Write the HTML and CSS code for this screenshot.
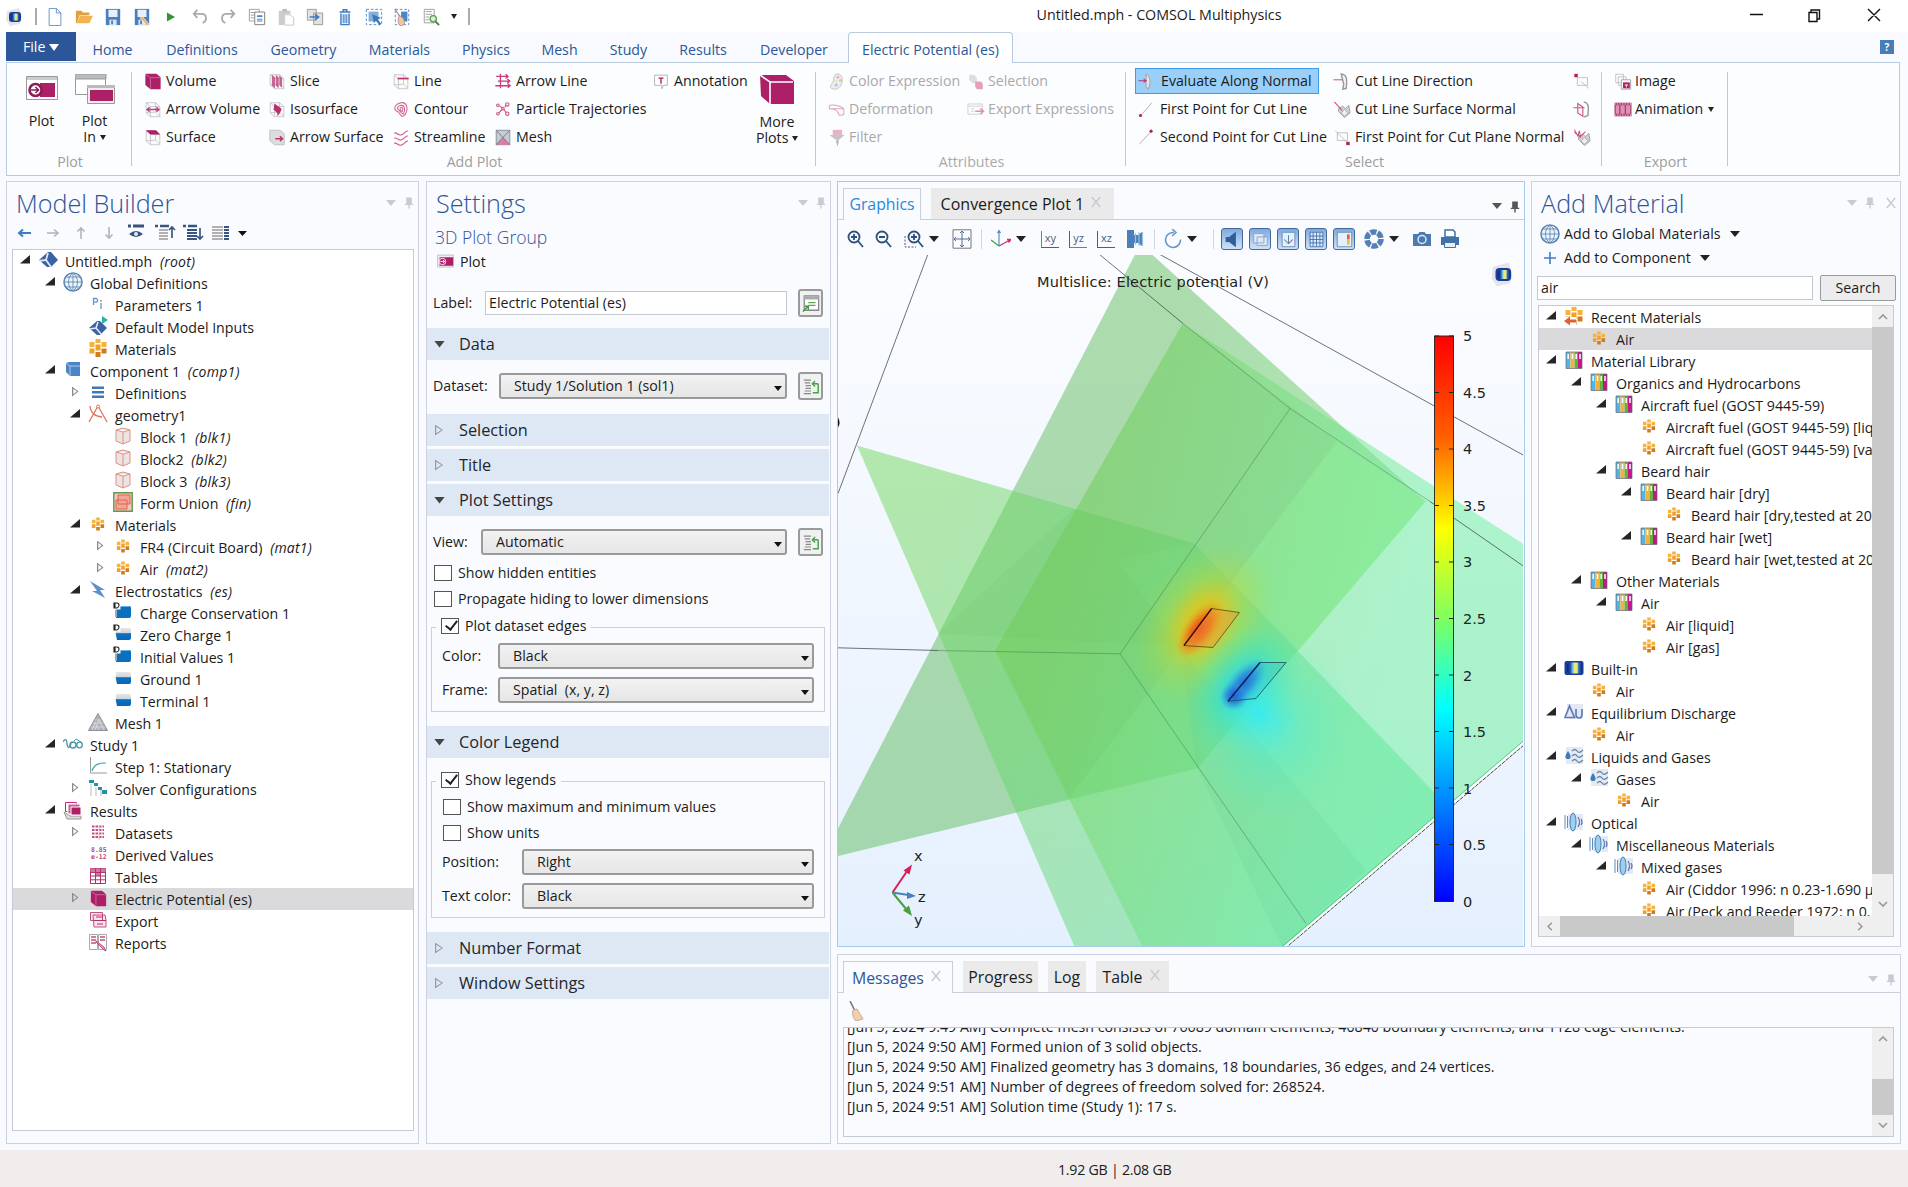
FILE: index.html
```html
<!DOCTYPE html>
<html lang="en">
<head>
<meta charset="utf-8">
<title>Untitled.mph - COMSOL Multiphysics</title>
<link rel="stylesheet" href="styles.css">
</head>
<body>
<svg class="defs" aria-hidden="true">
<defs>
<linearGradient id="gl" x1="0" x2="1"><stop offset="0" stop-color="#14206e"/><stop offset=".22" stop-color="#1f4fb0"/><stop offset=".36" stop-color="#5fb4e0"/><stop offset=".5" stop-color="#f0ec70"/><stop offset=".68" stop-color="#e4e480"/><stop offset=".78" stop-color="#2f6fc8"/><stop offset="1" stop-color="#14256e"/></linearGradient>
<linearGradient id="gcyl" x2="0" y2="1"><stop offset="0" stop-color="#e4e6e8"/><stop offset=".45" stop-color="#cfd3d6"/><stop offset=".46" stop-color="#0a72c2"/><stop offset="1" stop-color="#0a66b4"/></linearGradient>
</defs>
<symbol id="logo" viewBox="0 0 20 20"><path d="M3 4L15 1l3 9-2 7-10 2-4-6z" fill="#e4e4ea"/><rect x="5" y="5" width="12" height="10" rx="3" fill="#1c3c9c"/><rect x="7" y="6.500" width="9" height="7" rx="2" fill="url(#gl)"/></symbol>
<symbol id="new" viewBox="0 0 20 20"><path d="M3.500 .5h8l5 5v14h-13zM11.500 .5v5h5" fill="#fff" stroke="#5b8fc4"/></symbol>
<symbol id="open" viewBox="0 0 20 20"><path d="M1 3h6l2 2h7v3H5l-3 9H1z" fill="#e0a040"/><path d="M5.500 8.500H20L16 17H2z" fill="#f2b452"/></symbol>
<symbol id="save" viewBox="0 0 20 20"><path d="M2 1h16v18H2z" fill="#4a7fc0"/><path d="M5 2h10v8H5z" fill="#e8f1fb"/><path d="M6 13h8v6H6z" fill="#dbe6f2"/><path d="M8 14h2v4H8z" fill="#4a7fc0"/></symbol>
<symbol id="saveas" viewBox="0 0 20 20"><use href="#save"/><path d="M10 9l7 8 1 3-3-1-7-8z" fill="#f0b050" stroke="#fff" stroke-width=".7"/></symbol>
<symbol id="run" viewBox="0 0 20 20"><path d="M5.500 5l9 5-9 5z" fill="#36913a"/></symbol>
<symbol id="undo" viewBox="0 0 20 20"><path d="M7 2L3 6.500 7 11M3.500 6.500H12c6 0 6 8 1 10" fill="none" stroke="#aaa" stroke-width="2"/></symbol>
<symbol id="redo" viewBox="0 0 20 20"><path d="M13 2l4 4.500-4 4.500M16.500 6.500H8c-6 0-6 8-1 10" fill="none" stroke="#aaa" stroke-width="2"/></symbol>
<symbol id="copy" viewBox="0 0 20 20"><path d="M1.500 1.500h11v13h-11zM3 5h6M3 8h4M3 11h4" fill="#fff" stroke="#9a9a9a"/><path d="M7.500 4.500h11v14h-11z" fill="#fff" stroke="#777"/><path d="M10 8h6v2h-6zM10 12h6v1h-6zM10 14h6v1h-6z" fill="#4b86c6"/></symbol>
<symbol id="paste" viewBox="0 0 20 20"><path d="M2 3h13v4H8v12H2z" fill="#ccc"/><path d="M6 1h5v3H6z" fill="#bbb"/><path d="M8.500 7.500h6l4 3v8.500h-10z" fill="#fff" stroke="#c4c4c4"/></symbol>
<symbol id="dup" viewBox="0 0 20 20"><path d="M1.500 1.500h10v12h-10zM8.500 5.500h10v13h-10z" fill="#e2e2e2" stroke="#999"/><path d="M4 10h9M10 7l4 3-4 3" fill="none" stroke="#3a7ac0" stroke-width="1.800"/></symbol>
<symbol id="trash" viewBox="0 0 20 20"><path d="M4 4.500h12M8 4V2h4v2M5.500 6v12.500h9V6" fill="none" stroke="#3d7cc9" stroke-width="1.600"/><path d="M8 7v10M10 7v10M12 7v10" stroke="#3d7cc9" stroke-width="1.200"/></symbol>
<symbol id="sel" viewBox="0 0 20 20"><path d="M1.500 1.500h17v17h-17z" fill="none" stroke="#4a86c8" stroke-dasharray="3 2"/><path d="M4 4h11v11H4z" fill="#7fb0de"/><path d="M8 7l10 4-4 1.500 4 5-2 1.500-4-5-2 3z" fill="#3b78b8"/></symbol>
<symbol id="selc" viewBox="0 0 20 20"><path d="M2.500 1.500h15v17h-15z" fill="none" stroke="#4a86c8" stroke-dasharray="3 2"/><path d="M9 4h7v11h-7z" fill="#4a86c8"/><path d="M2 1l6 9" stroke="#99a" stroke-width="1.500"/><path d="M7 8l5 4 1 6-4 2c-4-2-4-6-2-12z" fill="#eec9a0" stroke="#a78" stroke-width=".8"/></symbol>
<symbol id="find" viewBox="0 0 20 20"><path d="M2.500 1.500h11v15h-11z" fill="#fff" stroke="#999"/><path d="M4 4h7M4 7h7M4 10h4M4 13h4" stroke="#999"/><circle cx="12.500" cy="12" r="3.500" fill="#d8eed6" stroke="#5a9e55" stroke-width="1.500"/><path d="M15 15l4 4" stroke="#4a8e45" stroke-width="2.200"/></symbol>
<symbol id="cube" viewBox="0 0 20 20"><path d="M1 1h13l5 4v14H7l-6-5z" fill="#ad2068"/><path d="M1 1.500l6 4h12M7 6v13" fill="none" stroke="#fff" stroke-width=".8" opacity=".45"/></symbol>
<symbol id="wire" viewBox="0 0 20 20"><path d="M2 2h11l5 4.500v12H7L2 14zM2 2l5 4.500h11M7 6.500v12M13 2v11l5 5M2 14l11-1" fill="#fafafa" fill-opacity=".6" stroke="#c2c2c6" stroke-width="1"/></symbol>
<symbol id="surf" viewBox="0 0 20 20"><use href="#wire"/><path d="M1.500 1.500h12l5 5H7z" fill="#ad2068"/></symbol>
<symbol id="avol" viewBox="0 0 20 20"><use href="#wire"/><path d="M3 10h14M6 7.500L3 10l3 2.500M14 7.500l3 2.500-3 2.500" fill="none" stroke="#c2407c" stroke-width="1.600"/></symbol>
<symbol id="slice" viewBox="0 0 20 20"><use href="#wire"/><path d="M4 2l3.500 3v13L4 15zM8.500 2L12 5v13l-3.500-3zM13 3l3 3v11l-3-2z" fill="#c0487e" fill-opacity=".85"/></symbol>
<symbol id="iso" viewBox="0 0 20 20"><use href="#wire"/><path d="M7 3l7 5c3 2 0 4-1 7l-3 3c2-5-2-5-4-8z" fill="#b8306f"/></symbol>
<symbol id="asurf" viewBox="0 0 20 20"><path d="M1.500 1.500h12l5 4v13H7l-5.500-5z" fill="#dcdcde" stroke="#bbb"/><path d="M8 11.500h9M13.500 8.500l3 3-3 3" fill="none" stroke="#b8306f" stroke-width="1.600"/></symbol>
<symbol id="line" viewBox="0 0 20 20"><use href="#wire"/><path d="M6 6.500h13" stroke="#c0346f" stroke-width="2"/></symbol>
<symbol id="contour" viewBox="0 0 20 20"><g fill="none" stroke="#d0608f" stroke-width="1.200"><path d="M10 2c8-1 9 9 4 15-4 3-5-2-7-4C0 10 2 4 10 2z"/><path d="M10 5c5 0 5 6 3 10-2 1-3-2-5-4-4-2-2-5 2-6z"/><path d="M10 7.500c2 0 3 2 1.500 5-2-1-4-4-1.500-5z"/></g></symbol>
<symbol id="stream" viewBox="0 0 20 20"><path d="M2 5c3-2 4 3 8 2s4-4 8-5M2 11c3-2 4 3 8 2s4-4 8-5M2 17c3-2 4 3 8 2s4-4 8-5" fill="none" stroke="#d0608f" stroke-width="1.300"/></symbol>
<symbol id="aline" viewBox="0 0 20 20"><path d="M2 4h13M4 9.500h13M1 15h17M13 1.500L16 4l-3 2.500M15 7l3 2.500-3 2.500M15.500 12.500l3 2.500-3 2.500M7 1v17" fill="none" stroke="#c43c78" stroke-width="1.500"/></symbol>
<symbol id="part" viewBox="0 0 20 20"><g fill="none" stroke="#cc5a8c" stroke-width="1.300"><circle cx="4" cy="5" r="1.500"/><circle cx="15" cy="4" r="2"/><circle cx="10" cy="9" r="1.500"/><circle cx="4" cy="15" r="1.500"/><circle cx="15" cy="15" r="2"/><path d="M6 6l3 2M12 7l2-2M5 14l4-4M11 10l3 4"/></g></symbol>
<symbol id="mesh" viewBox="0 0 20 20"><path d="M2 1.500h16v17H2z" fill="#c3ccd4" stroke="#7a8790"/><path d="M10 10l8 8.500H2z" fill="#dc7ba6"/><path d="M2 1.500l16 17M18 1.500l-16 17" stroke="#7a6b78"/></symbol>
<symbol id="anno" viewBox="0 0 20 20"><path d="M2.500 2.500h15v12H13l-2 4v-4H2.500z" fill="#fff" stroke="#aaa"/><path d="M7 6h6M10 6v6.500" stroke="#ad2068" stroke-width="1.600"/></symbol>
<symbol id="cexp" viewBox="0 0 20 20"><path d="M10 1c10 0 7 18-2 18S3 14 5 11 5 2 10 1z" fill="#eee" stroke="#bbb"/><circle cx="11" cy="5" r="1.800" fill="#f0b0b0"/><circle cx="14" cy="9" r="1.800" fill="#b0e0b0"/><circle cx="9" cy="14" r="2" fill="#b0c8f0"/><circle cx="9" cy="9" r="1.500" fill="#f4e0a0"/></symbol>
<symbol id="defo" viewBox="0 0 20 20"><path d="M1 5c8-1 13 1 17 4M1 9c6 0 9 1 12 8M1 5v4h17M13 17l5-1V9" fill="none" stroke="#e0a4bf" stroke-width="1.200"/></symbol>
<symbol id="filt" viewBox="0 0 20 20"><path d="M5 1h11v6H5z" fill="#eab0c8"/><path d="M1 7h18l-7 6v4h-3v-4z" fill="#c4c4c4"/><path d="M10.500 14v6" stroke="#e090b0"/></symbol>
<symbol id="selx" viewBox="0 0 20 20"><path d="M2 2h6l3 4v6H6L2 8z" fill="#ddd"/><path d="M9 10h7l2 3v6h-7l-2-3z" fill="#e6a0be"/></symbol>
<symbol id="expx" viewBox="0 0 20 20"><path d="M.5 3.500h17v12H.500zM0 6h17M4 9h4M4 12h4" fill="none" stroke="#ccc"/><path d="M9 12h9M15 9l4 3-4 3" fill="none" stroke="#e090b0" stroke-width="1.600"/></symbol>
<symbol id="norm" viewBox="0 0 20 20"><path d="M9 1c5 3 6 12 2 18l-2-3z" fill="#e8e4e8" stroke="#999"/><path d="M0 9h9M6 7l3 2-3 2" stroke="#c03070" fill="none" stroke-width="1.200"/></symbol>
<symbol id="p1" viewBox="0 0 20 20"><path d="M3 18L17 2" stroke="#aaa"/><circle cx="3.500" cy="17" r="1.800" fill="#ad2050"/></symbol>
<symbol id="p2" viewBox="0 0 20 20"><path d="M2 18L16 3" stroke="#aaa"/><circle cx="16" cy="2.500" r="1.800" fill="#ad2050"/></symbol>
<symbol id="cdir" viewBox="0 0 20 20"><path d="M9 1c7 1 7 6 6 17l-4 1 1-6z" fill="#f4f4f4" stroke="#999" stroke-width="1.700"/><path d="M0 8h10" stroke="#d0508a" stroke-width="1.200"/></symbol>
<symbol id="csur" viewBox="0 0 20 20"><path d="M6 9l5-3 3 3 4-4 1.500 9-6.500 5.500-7-7z" fill="#cfd0d2" stroke="#999"/><path d="M13 10l4 4-4 4-4-4z" fill="#efefef" stroke="#aaa"/><path d="M1 1l9 10" stroke="#d0508a" stroke-width="1.300"/></symbol>
<symbol id="csur2" viewBox="0 0 20 20"><path d="M6 9l5-3 3 3 4-4 1.500 9-6.500 5.500-7-7z" fill="#cfd0d2" stroke="#999"/><path d="M13 10l4 4-4 4-4-4z" fill="#efefef" stroke="#aaa"/><path d="M1 1l4 7 2-6 1 7 6-6M1 4l8 6" fill="none" stroke="#d0508a" stroke-width="1.200"/></symbol>
<symbol id="cpl" viewBox="0 0 20 20"><path d="M4.500 4.500h12v9h-12zM2 2l14 14" fill="none" stroke="#b8b8b8"/><path d="M15 15h4v4h-4z" fill="#ad2050"/></symbol>
<symbol id="cpl2" viewBox="0 0 20 20"><path d="M4.500 5.500h12v9h-12zM9 10l9 8" fill="none" stroke="#b8b8b8"/><path d="M1 1h4v4H1z" fill="#ad2050"/></symbol>
<symbol id="cnp" viewBox="0 0 20 20"><path d="M12 1c6 1 6 6 5 16l-5 2" fill="none" stroke="#999" stroke-width="1.700"/><path d="M5 3l6 4v11l-6-4zM0 8h13" fill="none" stroke="#d0508a" stroke-width="1.300"/></symbol>
<symbol id="img" viewBox="0 0 20 20"><path d="M1.500 1.500h9v10h-9zM4.500 4.500h9v10h-9z" fill="#fff" stroke="#bbb"/><path d="M8 8h11v11H8z" fill="#fff" stroke="#999"/><path d="M10 11h8v7h-8z" fill="#ad2068"/><path d="M12 14h4M14 14v3" stroke="#fff"/></symbol>
<symbol id="anim" viewBox="0 0 20 20"><path d="M0 2h20v16H0z" fill="#b03a72"/><path d="M1.500 5h4v10h-4zM7 5h5v10H7zM13.500 5h5v10h-5z" fill="#dd92b4"/><path d="M0 3.500h20M0 16.500h20" stroke="#fff" stroke-dasharray="1.500 1.500"/></symbol>
<symbol id="root" viewBox="0 0 20 20"><path d="M10 2h3l7 8-7 7h-4L1 10z" fill="#3a62a4"/><path d="M1 11l7-1 2-7M8 10l5 7" fill="none" stroke="#dfe9f6" stroke-width="1.800"/></symbol>
<symbol id="globe" viewBox="0 0 20 20"><circle cx="10" cy="10" r="9" fill="#eef4fa" stroke="#5d87b4" stroke-width="1.600"/><path d="M1 10h18M3 5h14M3 15h14M10 1v18M10 1C4 5 4 15 10 19M10 1c6 4 6 14 0 18" fill="none" stroke="#6b93bd"/></symbol>
<symbol id="pi" viewBox="0 0 20 20"><path d="M5.500 11V4.500h3q2.500 1.800 0 3.600h-3M13 9v6" fill="none" stroke="#6b93c4" stroke-width="1.300"/><path d="M12.200 6h1.600v1.500h-1.600z" fill="#6b93c4"/></symbol>
<symbol id="dmi" viewBox="0 0 20 20"><path d="M9 5h3l7 7-7 7H9l-8-7z" fill="#3a62a4"/><path d="M1 13l7-1 2-6M8 12l5 6" fill="none" stroke="#dfe9f6" stroke-width="1.600"/><path d="M14 0l6 4-6 4z" fill="#27b3ad"/></symbol>
<symbol id="matl" viewBox="0 0 20 20"><path d="M7.500 1h5v4h-5zM1.500 4h5v5h-5zM13.500 4h5v5h-5z" fill="#f5b23c"/><path d="M7.500 6.500h5v6h-5zM1.500 10.500h5v5h-5z" fill="#f0a02c"/><path d="M13.500 10.500h5v5h-5zM7.500 14h5v5h-5z" fill="#d07c1c"/></symbol>
<symbol id="mat" viewBox="0 0 20 20"><use href="#matl" transform="translate(2.800 2.800) scale(.72)"/></symbol>
<symbol id="recent" viewBox="0 0 20 20"><use href="#matl"/><path d="M0 11h12v9H0z" fill="#fff"/><path d="M0 15l6-4.500v3h6v3H6v3z" fill="#dd6238"/></symbol>
<symbol id="comp" viewBox="0 0 20 20"><path d="M3 3l3-1h11v14H7l-4-4z" fill="#4a86c6"/><path d="M3 3l4 3h10M7 6v10" stroke="#a9cbea" fill="none"/></symbol>
<symbol id="defn" viewBox="0 0 20 20"><path d="M4 4.500h12v2.500H4zM4 9h12v2.500H4zM4 13.500h12v2.500H4z" fill="#3f79b8"/></symbol>
<symbol id="geom" viewBox="0 0 20 20"><path d="M2 2c1 8 5 10 12 11M1 18L10 2l9 16" fill="none" stroke="#e07260" stroke-width="1.300"/><circle cx="10" cy="2.500" r="1.500" fill="#fff" stroke="#e07260"/></symbol>
<symbol id="blk" viewBox="0 0 20 20"><path d="M3 4l7-2 7 2v11l-7 3-7-3zM3 4l7 2 7-2M10 6v12" fill="#ece4e2" stroke="#dd9186"/></symbol>
<symbol id="funi" viewBox="0 0 20 20"><path d="M.8.800h18.400v18.400H.800z" fill="#f7c4b8" stroke="#5d9c4e" stroke-width="1.400"/><path d="M5 3h12v9H5zM3 8h11v9H3z" fill="#f09a8c" fill-opacity=".7" stroke="#e06450"/></symbol>
<symbol id="es" viewBox="0 0 20 20"><path d="M2 1l15 9h-5l5 8L4 11h5z" fill="#5a90cc"/></symbol>
<symbol id="cyb" viewBox="0 0 20 20"><path d="M3 4h13q2 0 2 2v8q0 2-2 2H3z" fill="#0a70be"/><path d="M6 4.500h10" stroke="#5fb0e6"/><path d="M3 5v10" stroke="#9ab" stroke-width="2"/></symbol>
<symbol id="cyw" viewBox="0 0 20 20"><path d="M3 4h13q2 0 2 2v8q0 2-2 2H4q-2-6-1-12z" fill="url(#gcyl)"/></symbol>
<symbol id="dd" viewBox="0 0 20 20"><path d="M.5.500h7v7h-7z" fill="#fff"/><path d="M1 1h3q2 0 2 2.200T4 6H1zM2 1v5" fill="none" stroke="#222" stroke-width="1.100"/></symbol>
<symbol id="cybd" viewBox="0 0 20 20"><use href="#cyb"/><use href="#dd"/></symbol>
<symbol id="cywd" viewBox="0 0 20 20"><use href="#cyw"/><use href="#dd"/></symbol>
<symbol id="tri" viewBox="0 0 20 20"><path d="M10 1.500l9.500 17H.500z" fill="#b0b4ba" stroke="#8a8f96"/><path d="M7 8h6M5 11h10M3 15h14M7 18l4-10 5 10M4 18l3-7 4 7" stroke="#d9dcdf" stroke-width=".8" fill="none"/></symbol>
<symbol id="study" viewBox="0 0 20 20"><path d="M0 8c3-5 4-1 4 2 1 5 3 4 4-1" fill="none" stroke="#4796a6" stroke-width="1.300"/><circle cx="10" cy="11" r="3" fill="none" stroke="#4796a6" stroke-width="1.300"/><circle cx="16.500" cy="11" r="2.800" fill="none" stroke="#4796a6" stroke-width="1.300"/><path d="M11 7l2-2 5 3" fill="none" stroke="#4796a6"/></symbol>
<symbol id="stat" viewBox="0 0 20 20"><path d="M2.500 1v16H19" fill="none" stroke="#999"/><path d="M4 15c2-7 7-8 14-8" fill="none" stroke="#3fa8b8" stroke-width="1.200"/></symbol>
<symbol id="solv" viewBox="0 0 20 20"><path d="M3 6v12M8 9v9M13 12v6" stroke="#bbb"/><path d="M1 2h5v3H1zM6 5h4v3H6zM10 9h4v3h-4zM14 12h5v4h-5z" fill="#2390a8"/></symbol>
<symbol id="res" viewBox="0 0 20 20"><path d="M1 12l3 7h14v-3H7z" fill="#ddd" stroke="#999"/><path d="M2.500 2.500h11v9h-11z" fill="#fff" stroke="#c27"/><path d="M5 4h12v10H5z" fill="#c8608f" stroke="#fff"/><path d="M8 7h10v8H8z" fill="#ad2068" stroke="#fff"/></symbol>
<symbol id="data" viewBox="0 0 20 20"><path d="M4 4.500h12M4 8h12M4 11.500h12M4 15h12" stroke="#c2507f" stroke-width="2" stroke-dasharray="2.500 1"/><path d="M11 3v15" stroke="#e9bccf"/></symbol>
<symbol id="tabl" viewBox="0 0 20 20"><path d="M2.500 2.500h15v15h-15z" fill="#fff" stroke="#b2306c"/><path d="M2.500 2.500h15v4h-15zM7 6h5v4H7z" fill="#cf7aa2"/><path d="M2.500 6.500h15M2.500 10h15M2.500 13.800h15M7.500 2.500v15M12.500 2.500v15" stroke="#b2306c"/></symbol>
<symbol id="expo" viewBox="0 0 20 20"><path d="M2.500 2.500h12v8h-12zM5 5h12l1 5v7H6z" fill="#f7e3ec" stroke="#c2507f"/><path d="M6 10.500h12M9 14h6M8 7h7" stroke="#b2306c"/></symbol>
<symbol id="rep" viewBox="0 0 20 20"><path d="M1.500 2.500h8v15h-8zM10.500 2.500h8v15h-8z" fill="#fff" stroke="#aaa"/><path d="M3 5h5M3 8h5M3 11h5M12 5h5M12 8h5" stroke="#c2507f" stroke-width="1.300"/><path d="M8 10l8 8 2 1-2-4-8-6z" fill="#e3a3c0" stroke="#b2306c" stroke-width=".8"/></symbol>
<symbol id="lib" viewBox="0 0 20 20"><path d="M2 2h4.500v16.500H2z" fill="#56b4e0"/><path d="M6.500 2h4v16.500h-4z" fill="#f0b23c"/><path d="M10.500 2h3.500v16.500h-3.500z" fill="#62b23c"/><path d="M14 2h4v16.500h-4z" fill="#c8148c"/><path d="M4.200 4v5M8.500 4v5M12.200 4v5M16 4v5" stroke="#fff" stroke-width="1.500"/><path d="M2 2h16v16.500H2z" fill="none" stroke="#667" stroke-width=".7"/></symbol>
<symbol id="bi" viewBox="0 0 20 20"><rect x=".5" y="3" width="19" height="14" rx="2" fill="#1c3c9c"/><rect x="3" y="4.500" width="15" height="11" rx="3" fill="url(#gl)"/></symbol>
<symbol id="du" viewBox="0 0 20 20"><path d="M3 2h16v15H3z" fill="#e4e8f4"/><path d="M1 15.500L5.500 4l5 11.500zM12 7v5q0 4 3 4t3-4V7" fill="none" stroke="#5c7cb8" stroke-width="1.700"/></symbol>
<symbol id="liq" viewBox="0 0 20 20"><path d="M2 1h17v17H2z" fill="#e5e9f3"/><path d="M4 5c4 6 3 8 0 8s-4-2 0-8z" fill="#3c7cb8"/><path d="M8 5q3-3 5 0t6-1M8 10q3-3 5 0t6-1M8 15q3-3 5 0t6-1" fill="none" stroke="#6788a8" stroke-width="1.300"/></symbol>
<symbol id="opt" viewBox="0 0 20 20"><path d="M4 2h15v16H4z" fill="#e5e9f3"/><path d="M1 3v14M3.500 4v12" stroke="#5c8fc0"/><ellipse cx="9" cy="10" rx="3" ry="9" fill="#9cd0ee" stroke="#3c80b8"/><path d="M14 5q3 5 0 10M17 7q2 3 0 6" fill="none" stroke="#5c7cb8" stroke-width="1.300"/></symbol>
<symbol id="pin" viewBox="0 0 20 20"><path d="M6 2h8v9h2v2h-5v5H9v-5H4v-2h2z" fill="currentColor"/></symbol>
<symbol id="x" viewBox="0 0 20 20"><path d="M4 3l12 14M16 3L4 17" stroke="currentColor" stroke-width="2.200"/></symbol>
<symbol id="plot" viewBox="0 0 20 20"><path d="M.5 2.500h19v14H.500z" fill="#eee" stroke="#bbb"/><path d="M3 5h16v10H3z" fill="#ad2068"/><circle cx="6.500" cy="10" r="3.800" fill="#ad2068" stroke="#fff"/><path d="M4 10h5M7 8l2 2-2 2" stroke="#fff" fill="none"/></symbol>
<symbol id="zin" viewBox="0 0 20 20"><circle cx="8" cy="8" r="5.500" fill="none" stroke="#2d4f78" stroke-width="1.800"/><path d="M12 12l5 6M5 8h6M8 5v6" stroke="#2d4f78" stroke-width="1.800"/></symbol>
<symbol id="zout" viewBox="0 0 20 20"><circle cx="8" cy="8" r="5.500" fill="none" stroke="#2d4f78" stroke-width="1.800"/><path d="M12 12l5 6M5 8h6" stroke="#2d4f78" stroke-width="1.800"/></symbol>
<symbol id="zbox" viewBox="0 0 20 20"><path d="M1 7v11h11" fill="none" stroke="#557" stroke-dasharray="2 1.500"/><use href="#zin" x="2"/></symbol>
<symbol id="fit" viewBox="0 0 20 20"><path d="M1 .8h18v18.400H1z" fill="#fafcff" stroke="#777"/><path d="M10 2v16M2 10h16M8 4l2-2 2 2M8 16l2 2 2-2M4 8l-2 2 2 2M16 8l2 2-2 2" fill="none" stroke="#556f90"/></symbol>
<symbol id="axes" viewBox="0 0 20 20"><path d="M8 17V2M6.500 4L8 1.500 9.500 4" fill="none" stroke="#4a86c8" stroke-width="1.100"/><path d="M8 17L0 11" stroke="#3fa046" stroke-width="1.300"/><path d="M8 17l11-6M16 10.500l4 0-2.500 3" stroke="#d03070" stroke-width="1.300" fill="none"/></symbol>
<symbol id="mir" viewBox="0 0 20 20"><path d="M2 1h7v5h4l4-3v14l-4-3H9v5H2z" fill="#4a80b8"/><path d="M10.500 4v12M14 3v14M17.500 3v14" stroke="#9dbfe0" stroke-width="1.200"/></symbol>
<symbol id="rot" viewBox="0 0 20 20"><path d="M11 3.500a7.500 7.500 0 1 0 6.500 7M9 0l4 3.500L9 7" fill="none" stroke="#6a98cc" stroke-width="1.600"/></symbol>
<symbol id="ap" viewBox="0 0 20 20"><circle cx="10" cy="10" r="7" fill="none" stroke="#5580b4" stroke-width="5.500" stroke-dasharray="6 1.300"/></symbol>
<symbol id="cam" viewBox="0 0 20 20"><path d="M1 5h5l1.500-2h5L14 5h5v12H1z" fill="#4a7ab0"/><circle cx="10" cy="10.500" r="4" fill="none" stroke="#dfeaf5" stroke-width="1.500"/></symbol>
<symbol id="prt" viewBox="0 0 20 20"><path d="M5 1h8l2 2v5H5z" fill="#fff" stroke="#3f70a8" stroke-width="1.500"/><path d="M1 8h18v8H1z" fill="#3f70a8"/><path d="M4.500 13.500h11v5h-11z" fill="#e6eef7" stroke="#3f70a8"/></symbol>
<symbol id="broom" viewBox="0 0 20 20"><path d="M3 0l5 10" stroke="#778" stroke-width="1.600"/><path d="M6 9l4-1 6 10-7 2c-3-3-4-6-3-11z" fill="#f2d0ac" stroke="#b98" stroke-width=".8"/></symbol>
<symbol id="edit" viewBox="0 0 20 20"><path d="M2.500 1.500h16v16h-16z" fill="#fff" stroke="#888" stroke-width="1.400"/><path d="M2 2h17v3.500H2z" fill="#aaa"/><path d="M7 9h8M7 12h8" stroke="#5aa84a" stroke-width="1.300"/><path d="M1 19l5-5M3 13h4v4" fill="none" stroke="#3d9a3a" stroke-width="1.600"/></symbol>
<symbol id="goto" viewBox="0 0 20 20"><path d="M2 3h8M3 6h6M4 9h6M4 12h6M3 15h7M2 18h8" stroke="#888" stroke-width="1.300"/><path d="M18 7v10h-6M18 7h-6M14.500 4l-3 3 3 3" fill="none" stroke="#4ba04a" stroke-width="1.600"/></symbol>
</svg>

<header class="titlebar">
  <svg class="ic app"><use href="#logo"/></svg><b class="bar"></b>
  <svg class="ic"><use href="#new"/></svg><svg class="ic"><use href="#open"/></svg><svg class="ic"><use href="#save"/></svg><svg class="ic"><use href="#saveas"/></svg><svg class="ic"><use href="#run"/></svg><svg class="ic"><use href="#undo"/></svg><svg class="ic"><use href="#redo"/></svg><svg class="ic"><use href="#copy"/></svg><svg class="ic"><use href="#paste"/></svg><svg class="ic"><use href="#dup"/></svg><svg class="ic"><use href="#trash"/></svg><svg class="ic"><use href="#sel"/></svg><svg class="ic"><use href="#selc"/></svg><svg class="ic"><use href="#find"/></svg>
  <i class="caret sm"></i><b class="bar"></b>
  <h1>Untitled.mph - COMSOL Multiphysics</h1>
  <svg class="winbtns" viewBox="0 0 150 24"><path d="M10 11.500h13M69 9.500h8v9h-8zM71 9V7h8.500v9H77M128 6l12 12M140 6l-12 12" fill="none" stroke="#111" stroke-width="1.400"/></svg>
</header>

<nav class="tabs">
  <span class="file">File <i class="caret white"></i></span>
  <span>Home</span><span>Definitions</span><span>Geometry</span><span>Materials</span><span>Physics</span><span>Mesh</span><span>Study</span><span>Results</span><span>Developer</span><span class="active">Electric Potential (es)</span>
  <span class="help">?</span>
</nav>

<section class="ribbon">
  <div class="group g-plot">
    <div class="bigs">
      <div class="big"><svg width="32" height="30" viewBox="0 0 32 30"><path d="M.5 2.500h31v23H.500z" fill="#fff" stroke="#999"/><path d="M1 3h30v3H1z" fill="#ccc"/><path d="M14 9h15v14H14z" fill="#ad2068"/><circle cx="9.500" cy="16" r="6" fill="#fff" stroke="#8a1c58" stroke-width="2.500"/><path d="M5 16h7M9.500 13l3 3-3 3" stroke="#8a1c58" fill="none" stroke-width="1.600"/></svg><span>Plot</span></div>
      <div class="big"><svg width="40" height="30" viewBox="0 0 40 30"><path d="M.5.500h30v20H.500z" fill="#fff" stroke="#999"/><path d="M0 0h31v5H0z" fill="#bbb" stroke="#999"/><path d="M12.500 11.500h27v18h-27z" fill="#eee" stroke="#999"/><path d="M12 11h28v3H12z" fill="#bbb"/><path d="M15 16h23v11H15z" fill="#ad2068"/></svg><span>Plot<br>In <i class="caret sm"></i></span></div>
    </div>
    <footer>Plot</footer>
  </div>
  <div class="group g-add">
    <div class="cmds">
      <span><svg class="ic"><use href="#cube"/></svg>Volume</span><span><svg class="ic"><use href="#slice"/></svg>Slice</span><span><svg class="ic"><use href="#line"/></svg>Line</span><span><svg class="ic"><use href="#aline"/></svg>Arrow Line</span><span><svg class="ic"><use href="#anno"/></svg>Annotation</span>
      <span><svg class="ic"><use href="#avol"/></svg>Arrow Volume</span><span><svg class="ic"><use href="#iso"/></svg>Isosurface</span><span><svg class="ic"><use href="#contour"/></svg>Contour</span><span><svg class="ic"><use href="#part"/></svg>Particle Trajectories</span><span></span>
      <span><svg class="ic"><use href="#surf"/></svg>Surface</span><span><svg class="ic"><use href="#asurf"/></svg>Arrow Surface</span><span><svg class="ic"><use href="#stream"/></svg>Streamline</span><span><svg class="ic"><use href="#mesh"/></svg>Mesh</span>
    </div>
    <div class="big more"><svg width="34" height="31" viewBox="0 0 34 31"><path d="M0 1h26l8 6v23H10L1 22z" fill="#ad2068"/><path d="M0 1l10 7h23M10 8v22" fill="none" stroke="#fff" stroke-width="1.600"/></svg><span>More<br>Plots <i class="caret sm"></i></span></div>
    <footer>Add Plot</footer>
  </div>
  <div class="group g-attr off">
    <div class="cmds">
      <span><svg class="ic"><use href="#cexp"/></svg>Color Expression</span><span><svg class="ic"><use href="#selx"/></svg>Selection</span>
      <span><svg class="ic"><use href="#defo"/></svg>Deformation</span><span><svg class="ic"><use href="#expx"/></svg>Export Expressions</span>
      <span><svg class="ic"><use href="#filt"/></svg>Filter</span>
    </div>
    <footer>Attributes</footer>
  </div>
  <div class="group g-sel">
    <div class="cmds">
      <span class="on"><svg class="ic"><use href="#norm"/></svg>Evaluate Along Normal</span><span><svg class="ic"><use href="#cdir"/></svg>Cut Line Direction</span><span><svg class="ic"><use href="#cpl2"/></svg></span>
      <span><svg class="ic"><use href="#p1"/></svg>First Point for Cut Line</span><span><svg class="ic"><use href="#csur"/></svg>Cut Line Surface Normal</span><span><svg class="ic"><use href="#cnp"/></svg></span>
      <span><svg class="ic"><use href="#p2"/></svg>Second Point for Cut Line</span><span><svg class="ic"><use href="#cpl"/></svg>First Point for Cut Plane Normal</span><span><svg class="ic"><use href="#csur2"/></svg></span>
    </div>
    <footer>Select</footer>
  </div>
  <div class="group g-exp">
    <div class="cmds"><span><svg class="ic"><use href="#img"/></svg>Image</span><span><svg class="ic"><use href="#anim"/></svg>Animation <i class="caret sm"></i></span></div>
    <footer>Export</footer>
  </div>
</section>

<main class="work">
  <section class="panel builder">
    <div class="head"><h2>Model Builder</h2><i class="caret dim"></i><svg class="pin"><use href="#pin"/></svg></div>
    <svg class="mbtools" width="240" height="20" viewBox="0 0 240 20"><path d="M7 10h12M11 6.500L7 10l4 3.500" fill="none" stroke="#3f7cc4" stroke-width="2"/><path d="M35 10h11M42 6.500l4 3.500-4 3.500M69 16V5M65.500 8.500L69 5l3.500 3.500M97 4v11M93.500 11.500L97 15l3.500-3.500" fill="none" stroke="#b4b4b8" stroke-width="1.600"/><path d="M116 3h3M121 3h11" stroke="#39557f" stroke-width="3"/><path d="M117 11q7-6 14 0-7 6-14 0z" fill="#39557f"/><circle cx="124" cy="11" r="2" fill="#dfe8f4"/><g fill="none"><path d="M143 3h3M148 3h9M171 3h3M176 3h9" stroke="#39557f" stroke-width="2.500"/><path d="M147 7h9M147 10h9M147 13h9M147 16h9M200 4h11M200 7h11M200 10h11M200 13h11M200 16h11" stroke="#999" stroke-width="1.500"/><path d="M175 7h10M175 10h10M175 13h10M175 16h10M212 4h5M212 7h5M212 10h5M212 13h5M212 16h5" stroke="#39557f" stroke-width="1.800"/><path d="M160 15V4M157 7l3-3 3 3M188 5v11M185 13l3 3 3-3" stroke="#39557f" stroke-width="1.700"/></g><path d="M226 8h9l-4.500 5z" fill="#111"/></svg>
    <ul class="tree">
      <li class="l0 open"><svg class="ic"><use href="#root"/></svg>Untitled.mph <em>(root)</em></li>
      <li class="l1 open"><svg class="ic"><use href="#globe"/></svg>Global Definitions</li>
      <li class="l2"><svg class="ic"><use href="#pi"/></svg>Parameters 1</li>
      <li class="l2"><svg class="ic"><use href="#dmi"/></svg>Default Model Inputs</li>
      <li class="l2"><svg class="ic"><use href="#matl"/></svg>Materials</li>
      <li class="l1 open"><svg class="ic"><use href="#comp"/></svg>Component 1 <em>(comp1)</em></li>
      <li class="l2 shut"><svg class="ic"><use href="#defn"/></svg>Definitions</li>
      <li class="l2 open"><svg class="ic"><use href="#geom"/></svg>geometry1</li>
      <li class="l3"><svg class="ic"><use href="#blk"/></svg>Block 1 <em>(blk1)</em></li>
      <li class="l3"><svg class="ic"><use href="#blk"/></svg>Block2 <em>(blk2)</em></li>
      <li class="l3"><svg class="ic"><use href="#blk"/></svg>Block 3 <em>(blk3)</em></li>
      <li class="l3"><svg class="ic"><use href="#funi"/></svg>Form Union <em>(fin)</em></li>
      <li class="l2 open"><svg class="ic"><use href="#mat"/></svg>Materials</li>
      <li class="l3 shut"><svg class="ic"><use href="#mat"/></svg>FR4 (Circuit Board) <em>(mat1)</em></li>
      <li class="l3 shut"><svg class="ic"><use href="#mat"/></svg>Air <em>(mat2)</em></li>
      <li class="l2 open"><svg class="ic"><use href="#es"/></svg>Electrostatics <em>(es)</em></li>
      <li class="l3"><svg class="ic"><use href="#cybd"/></svg>Charge Conservation 1</li>
      <li class="l3"><svg class="ic"><use href="#cywd"/></svg>Zero Charge 1</li>
      <li class="l3"><svg class="ic"><use href="#cybd"/></svg>Initial Values 1</li>
      <li class="l3"><svg class="ic"><use href="#cyw"/></svg>Ground 1</li>
      <li class="l3"><svg class="ic"><use href="#cyw"/></svg>Terminal 1</li>
      <li class="l2"><svg class="ic"><use href="#tri"/></svg>Mesh 1</li>
      <li class="l1 open"><svg class="ic"><use href="#study"/></svg>Study 1</li>
      <li class="l2"><svg class="ic"><use href="#stat"/></svg>Step 1: Stationary</li>
      <li class="l2 shut"><svg class="ic"><use href="#solv"/></svg>Solver Configurations</li>
      <li class="l1 open"><svg class="ic"><use href="#res"/></svg>Results</li>
      <li class="l2 shut"><svg class="ic"><use href="#data"/></svg>Datasets</li>
      <li class="l2"><span class="ic num">8.85<br>e-12</span>Derived Values</li>
      <li class="l2"><svg class="ic"><use href="#tabl"/></svg>Tables</li>
      <li class="l2 shut picked"><svg class="ic"><use href="#cube" x="2" y="2" width="17" height="17"/></svg>Electric Potential (es)</li>
      <li class="l2"><svg class="ic"><use href="#expo"/></svg>Export</li>
      <li class="l2"><svg class="ic"><use href="#rep"/></svg>Reports</li>
    </ul>
  </section>

  <section class="panel settings">
    <div class="head"><h2>Settings</h2><i class="caret dim"></i><svg class="pin"><use href="#pin"/></svg></div>
    <h3>3D Plot Group</h3>
    <div class="plotbtn"><svg class="ic"><use href="#plot"/></svg>Plot</div>
    <div class="field labelrow"><label>Label:</label><span class="input">Electric Potential (es)</span><span class="sq"><svg class="ic"><use href="#edit"/></svg></span></div>
    <h4 class="exp">Data</h4>
    <div class="field datarow"><label>Dataset:</label><span class="select">Study 1/Solution 1 (sol1)</span><span class="sq"><svg class="ic"><use href="#goto"/></svg></span></div>
    <h4>Selection</h4>
    <h4>Title</h4>
    <h4 class="exp">Plot Settings</h4>
    <div class="field viewrow"><label>View:</label><span class="select">Automatic</span><span class="sq"><svg class="ic"><use href="#goto"/></svg></span></div>
    <div class="check"><i></i>Show hidden entities</div>
    <div class="check"><i></i>Propagate hiding to lower dimensions</div>
    <div class="box edges">
      <div class="legend check yes"><i></i>Plot dataset edges</div>
      <div class="field"><label>Color:</label><span class="select">Black</span></div>
      <div class="field"><label>Frame:</label><span class="select">Spatial&nbsp; (x, y, z)</span></div>
    </div>
    <h4 class="exp">Color Legend</h4>
    <div class="box legends">
      <div class="legend check yes"><i></i>Show legends</div>
      <div class="check"><i></i>Show maximum and minimum values</div>
      <div class="check"><i></i>Show units</div>
      <div class="field"><label>Position:</label><span class="select">Right</span></div>
      <div class="field"><label>Text color:</label><span class="select">Black</span></div>
    </div>
    <h4>Number Format</h4>
    <h4>Window Settings</h4>
  </section>

  <section class="panel graphics">
    <div class="ptabs"><span class="active gfx">Graphics</span><span class="conv">Convergence Plot 1 <svg class="pin"><use href="#x"/></svg></span><em></em><i class="caret"></i><svg class="pin"><use href="#pin"/></svg></div>
    <div class="gtools">
      <svg class="ic"><use href="#zin"/></svg><svg class="ic"><use href="#zout"/></svg><svg class="ic"><use href="#zbox"/></svg><i class="caret"></i><svg class="ic"><use href="#fit"/></svg><b></b><svg class="ic"><use href="#axes"/></svg><i class="caret"></i>
      <span class="plane gr">xy</span><span class="plane bg">yz</span><span class="plane br">xz</span><svg class="ic"><use href="#mir"/></svg><b></b><svg class="ic"><use href="#rot"/></svg><i class="caret"></i><b></b>
      <span class="tog"><svg viewBox="0 0 20 20"><path d="M2 7h4l8-6v18l-8-6H2z" fill="#2f5f98"/></svg></span>
      <span class="tog"><svg viewBox="0 0 20 20"><path d="M2 3h12v11H2zM6 7h12v10H6z" fill="#dbe9f8" stroke="#8d9cc0"/></svg></span>
      <span class="tog"><svg viewBox="0 0 20 20"><path d="M2.500 1.500h15v17h-15z" fill="#e6f0fa" stroke="#5d86b8"/><path d="M10 15V5" stroke="#4a86c8" stroke-width="1.200"/><path d="M10 15l-5-5" stroke="#3fa046" stroke-width="1.200"/><path d="M10 15l5-5" stroke="#d03070" stroke-width="1.200"/></svg></span>
      <span class="tog"><svg viewBox="0 0 20 20"><path d="M2.500 1.500h15v17h-15zM6 2v16M10 2v16M14 2v16M2 6h16M2 10h16M2 14h16" fill="#dbe9f8" stroke="#3f6ea8"/></svg></span>
      <span class="tog"><svg viewBox="0 0 20 20"><path d="M1.500 1.500h17v17h-17z" fill="#e6f0fa" stroke="#5d86b8"/><path d="M13 4h3v6h-3z" fill="#e85a28"/><path d="M13 10h3v6h-3z" fill="#f0b840"/></svg></span>
      <svg class="ic"><use href="#ap"/></svg><i class="caret"></i><svg class="ic"><use href="#cam"/></svg><svg class="ic"><use href="#prt"/></svg>
    </div>
    <svg class="canvas" width="685" height="692" viewBox="838 254.500 685 692">
      <defs>
        <linearGradient id="bg" x2="0" y2="1"><stop offset="0" stop-color="#fbfcff"/><stop offset="1" stop-color="#e5f0fe"/></linearGradient>
        <linearGradient id="f1" x1="1120" y1="520" x2="1400" y2="600" gradientUnits="userSpaceOnUse"><stop offset="0" stop-color="#60bc5e"/><stop offset="1" stop-color="#6ed868"/></linearGradient>
        <linearGradient id="f2" x1="900" y1="600" x2="1420" y2="830" gradientUnits="userSpaceOnUse"><stop offset="0" stop-color="#70d65e"/><stop offset=".5" stop-color="#62d878"/><stop offset="1" stop-color="#50e09c"/></linearGradient>
        <linearGradient id="f3" x1="1060" y1="600" x2="1380" y2="700" gradientUnits="userSpaceOnUse"><stop offset="0" stop-color="#76d65c"/><stop offset=".5" stop-color="#70e080"/><stop offset="1" stop-color="#68f09a"/></linearGradient>
        <radialGradient id="hot"><stop offset="0" stop-color="#ecb010" stop-opacity=".95"/><stop offset=".3" stop-color="#e2c81c" stop-opacity=".8"/><stop offset=".6" stop-color="#bcd83a" stop-opacity=".4"/><stop offset="1" stop-color="#a0d850" stop-opacity="0"/></radialGradient>
        <radialGradient id="red"><stop offset="0" stop-color="#f03c1c"/><stop offset=".45" stop-color="#f06018" stop-opacity=".85"/><stop offset="1" stop-color="#f0a010" stop-opacity="0"/></radialGradient>
        <radialGradient id="cold"><stop offset="0" stop-color="#28b4e8" stop-opacity=".9"/><stop offset=".35" stop-color="#2cdcdc" stop-opacity=".65"/><stop offset=".65" stop-color="#40e4c0" stop-opacity=".35"/><stop offset="1" stop-color="#60e8b0" stop-opacity="0"/></radialGradient>
        <radialGradient id="blue"><stop offset="0" stop-color="#1c40d0"/><stop offset=".45" stop-color="#2468dc" stop-opacity=".8"/><stop offset="1" stop-color="#28b0e8" stop-opacity="0"/></radialGradient>
        <radialGradient id="cyan"><stop offset="0" stop-color="#30ecff" stop-opacity=".9"/><stop offset="1" stop-color="#50f0d0" stop-opacity="0"/></radialGradient>
        <linearGradient id="jet" x2="0" y2="1"><stop offset="0" stop-color="#f00"/><stop offset=".18" stop-color="#ff6000"/><stop offset=".34" stop-color="#ffff00"/><stop offset=".5" stop-color="#7fff60"/><stop offset=".66" stop-color="#00ffff"/><stop offset=".83" stop-color="#0080ff"/><stop offset="1" stop-color="#00f"/></linearGradient>
      </defs>
      <rect x="838" y="254" width="686" height="694" fill="url(#bg)"/>
      <path d="M1135 254h17L1425.500 501 1197 768 838 855.500V828z" fill="url(#f1)" fill-opacity=".5"/>
      <path d="M857 445L1194 543 1447 805 1281 948H1075.300z" fill="url(#f2)" fill-opacity=".5"/>
      <path d="M1182.700 323L1524 544V740L1281 948H1143.500L995 650z" fill="url(#f3)" fill-opacity=".5"/>
      <path d="M1182.700 323L1336.700 441 1069 798 995 650z" fill="#6cb860" fill-opacity=".14"/>
      <path d="M1336.700 441L1425.500 501 1299 650 1232 580z" fill="#8af48a" fill-opacity=".25"/>
      <path d="M938 633L1180 646 1117 560 1194 543 1074 508z" fill="#6cc060" fill-opacity=".12"/>
      <path d="M1180 646L1366 870 1282 946 1197 768z" fill="#60cc90" fill-opacity=".15"/>
      <ellipse cx="1272" cy="726" rx="84" ry="92" fill="url(#cyan)" opacity=".5"/>
      <ellipse cx="1203" cy="622" rx="90" ry="60" fill="url(#hot)" transform="rotate(-56 1203 622)"/>
      <ellipse cx="1243" cy="686" rx="74" ry="50" fill="url(#cold)" transform="rotate(-53 1243 686)"/>
      <ellipse cx="1259" cy="713" rx="42" ry="44" fill="url(#cyan)" opacity=".85"/>
      <ellipse cx="1200" cy="629" rx="34" ry="16" fill="url(#red)" transform="rotate(-53 1200 629)"/>
      <ellipse cx="1244" cy="683" rx="32" ry="15" fill="url(#blue)" transform="rotate(-50 1244 683)" opacity=".7"/>
      <circle cx="1234" cy="696" r="15" fill="url(#blue)" opacity=".75"/>
      <path d="M1211.700 608L1239.400 612 1213 647 1184 645z" fill="#e89838" fill-opacity=".45" stroke="#5a4a20" stroke-width=".8"/>
      <path d="M1184 645l27.700-37" stroke="#3a1010" stroke-width="1.400"/>
      <path d="M1260 662h26L1256 698l-28 2.700z" fill="#2a9ad8" fill-opacity=".15" stroke="#1c4a60" stroke-width=".8"/>
      <path d="M1228 700.700L1260 662" stroke="#101c60" stroke-width="1.400"/>
      <g fill="none" stroke="#4a4f52" stroke-width=".8">
        <path d="M927.800 254L838 493M1160 254L1524 455M838 647.300L938 650"/>
        <path d="M1099.600 254L1183 323M1430 501L1524 566" />
        <path d="M1183 323L1290 408 1430 501M1290 408L1120 653.300 1306 923M938 650L1120 653.300" stroke="#3c7048" stroke-opacity=".55"/>
      </g>
      <path d="M1524 742.500L1283.500 948" stroke="#fff" stroke-width="2.500"/>
      <path d="M1524 740L1281 947" stroke="#3cc468" stroke-width=".8"/>
      <path d="M1524 744.500L1285 948" stroke="#333" stroke-width=".9" stroke-dasharray="4 1"/>
      <path d="M838 417q3 5 0 10z" fill="#111"/>
      <rect x="1434.500" y="335.500" width="19" height="565.500" fill="url(#jet)" stroke="#222" stroke-width=".9"/>
      <path d="M1435 335.500h4M1449 335.500h5M1435 392h4M1449 392h5M1435 448.500h4M1449 448.500h5M1435 505h4M1449 505h5M1435 561.500h4M1449 561.500h5M1435 618h4M1449 618h5M1435 674.500h4M1449 674.500h5M1435 731h4M1449 731h5M1435 787.500h4M1449 787.500h5M1435 844h4M1449 844h5" stroke="#222"/>
      <g class="vt">
        <text x="1463" y="340">5</text><text x="1463" y="397">4.5</text><text x="1463" y="453">4</text><text x="1463" y="510">3.5</text><text x="1463" y="566">3</text><text x="1463" y="623">2.5</text><text x="1463" y="680">2</text><text x="1463" y="736">1.5</text><text x="1463" y="793">1</text><text x="1463" y="849">0.5</text><text x="1463" y="906">0</text>
        <text x="1037" y="286" textLength="232">Multislice: Electric potential (V)</text>
        <text x="914" y="860">x</text><text x="918" y="901">z</text><text x="914" y="924">y</text>
      </g>
      <g stroke-width="2" fill="none"><path d="M892.500 892l15-22" stroke="#d81e5a"/><path d="M892.500 892l16 2.500" stroke="#4a80bc"/><path d="M892.500 892l14 17" stroke="#4a9e3c"/></g>
      <path d="M912 864l-8.500 6 6 4z" fill="#d81e5a"/><path d="M916 895.500l-9-4v7z" fill="#4a80bc"/><path d="M912 915.500l-9-5.500 6-5z" fill="#4a9e3c"/>
      <use href="#logo" x="1488" y="261" width="28" height="26"/>
    </svg>
  </section>

  <section class="panel addmat">
    <div class="head"><h2>Add Material</h2><i class="caret dim"></i><svg class="pin"><use href="#pin"/></svg><svg class="pin"><use href="#x"/></svg></div>
    <div class="addrow"><svg class="ic"><use href="#globe"/></svg>Add to Global Materials <i class="caret"></i></div>
    <div class="addrow"><svg class="ic" viewBox="0 0 20 20"><path d="M10 4v12M4 10h12" stroke="#3d7cc0" stroke-width="1.600"/></svg>Add to Component <i class="caret"></i></div>
    <div class="search"><span class="input">air</span><span class="btn">Search</span></div>
    <div class="lib">
      <ul class="tree">
        <li class="l0 open"><svg class="ic"><use href="#recent"/></svg>Recent Materials</li>
        <li class="l1 picked"><svg class="ic"><use href="#mat"/></svg>Air</li>
        <li class="l0 open"><svg class="ic"><use href="#lib"/></svg>Material Library</li>
        <li class="l1 open"><svg class="ic"><use href="#lib"/></svg>Organics and Hydrocarbons</li>
        <li class="l2 open"><svg class="ic"><use href="#lib"/></svg>Aircraft fuel (GOST 9445-59)</li>
        <li class="l3"><svg class="ic"><use href="#mat"/></svg>Aircraft fuel (GOST 9445-59) [liquid]</li>
        <li class="l3"><svg class="ic"><use href="#mat"/></svg>Aircraft fuel (GOST 9445-59) [vapor]</li>
        <li class="l2 open"><svg class="ic"><use href="#lib"/></svg>Beard hair</li>
        <li class="l3 open"><svg class="ic"><use href="#lib"/></svg>Beard hair [dry]</li>
        <li class="l4"><svg class="ic"><use href="#mat"/></svg>Beard hair [dry,tested at 200</li>
        <li class="l3 open"><svg class="ic"><use href="#lib"/></svg>Beard hair [wet]</li>
        <li class="l4"><svg class="ic"><use href="#mat"/></svg>Beard hair [wet,tested at 200</li>
        <li class="l1 open"><svg class="ic"><use href="#lib"/></svg>Other Materials</li>
        <li class="l2 open"><svg class="ic"><use href="#lib"/></svg>Air</li>
        <li class="l3"><svg class="ic"><use href="#mat"/></svg>Air [liquid]</li>
        <li class="l3"><svg class="ic"><use href="#mat"/></svg>Air [gas]</li>
        <li class="l0 open"><svg class="ic"><use href="#bi"/></svg>Built-in</li>
        <li class="l1"><svg class="ic"><use href="#mat"/></svg>Air</li>
        <li class="l0 open"><svg class="ic"><use href="#du"/></svg>Equilibrium Discharge</li>
        <li class="l1"><svg class="ic"><use href="#mat"/></svg>Air</li>
        <li class="l0 open"><svg class="ic"><use href="#liq"/></svg>Liquids and Gases</li>
        <li class="l1 open"><svg class="ic"><use href="#liq"/></svg>Gases</li>
        <li class="l2"><svg class="ic"><use href="#mat"/></svg>Air</li>
        <li class="l0 open"><svg class="ic"><use href="#opt"/></svg>Optical</li>
        <li class="l1 open"><svg class="ic"><use href="#opt"/></svg>Miscellaneous Materials</li>
        <li class="l2 open"><svg class="ic"><use href="#opt"/></svg>Mixed gases</li>
        <li class="l3"><svg class="ic"><use href="#mat"/></svg>Air (Ciddor 1996: n 0.23-1.690 µm)</li>
        <li class="l3"><svg class="ic"><use href="#mat"/></svg>Air (Peck and Reeder 1972: n 0.185</li>
      </ul>
      <div class="vscroll"><svg viewBox="0 0 21 21"><path d="M7 13l4-4 4 4" fill="none" stroke="#999" stroke-width="1.600"/></svg><b></b><svg viewBox="0 0 21 21"><path d="M7 8l4 4 4-4" fill="none" stroke="#999" stroke-width="1.600"/></svg></div>
      <div class="hscroll"><svg viewBox="0 0 21 21"><path d="M13 7l-4 4 4 4" fill="none" stroke="#999" stroke-width="1.600"/></svg><b></b><svg viewBox="0 0 21 21"><path d="M8 7l4 4-4 4" fill="none" stroke="#999" stroke-width="1.600"/></svg></div>
    </div>
  </section>

  <section class="panel messages">
    <div class="ptabs"><span class="active msg">Messages <svg class="pin"><use href="#x"/></svg></span><span class="prg">Progress</span><span class="log">Log</span><span class="tab">Table <svg class="pin"><use href="#x"/></svg></span><em></em><i class="caret dim"></i><svg class="pin"><use href="#pin"/></svg></div>
    <div class="mtools"><svg class="ic"><use href="#broom"/></svg></div>
    <div class="logbox">
      <div class="lines"><p>[Jun 5, 2024 9:49 AM] Complete mesh consists of 76689 domain elements, 40840 boundary elements, and 1128 edge elements.</p><p>[Jun 5, 2024 9:50 AM] Formed union of 3 solid objects.</p><p>[Jun 5, 2024 9:50 AM] Finalized geometry has 3 domains, 18 boundaries, 36 edges, and 24 vertices.</p><p>[Jun 5, 2024 9:51 AM] Number of degrees of freedom solved for: 268524.</p><p>[Jun 5, 2024 9:51 AM] Solution time (Study 1): 17 s.</p></div>
      <div class="vscroll"><svg viewBox="0 0 21 21"><path d="M7 13l4-4 4 4" fill="none" stroke="#999" stroke-width="1.600"/></svg><b></b><svg viewBox="0 0 21 21"><path d="M7 8l4 4 4-4" fill="none" stroke="#999" stroke-width="1.600"/></svg></div>
    </div>
  </section>
</main>
<footer class="status">1.92 GB | 2.08 GB</footer>
</body>
</html>
```
FILE: styles.css
```css
* { box-sizing: border-box; margin: 0; padding: 0; }
body { width: 1908px; height: 1187px; overflow: hidden; display: flex; flex-direction: column; background: #f8faff; font: 14.200px/20px "Open Sans", "Noto Sans", sans-serif; color: #1b1b1b; }
.defs { position: absolute; width: 0; height: 0; }
.ic { width: 20px; height: 20px; flex: none; display: block; }
.pin { width: 16px; height: 14px; flex: none; color: #c9cbd3; }
h1, h2, h3, h4 { font-weight: 400; }
ul { list-style: none; }
.caret { display: inline-block; flex: none; border: 5px solid transparent; border-top: 6px solid #222; border-bottom: 0; }
.caret.sm { border-width: 5px 3.500px 0; vertical-align: 2px; }
.caret.white { border-width: 7px 5px 0; border-top-color: #fff; vertical-align: 1px; }
.caret.dim { border-top-color: #c9cbd3; }

.titlebar { height: 32px; flex: none; background: #fff; display: grid; grid-template-columns: 27px 13.500px 29px 29px 29px 29px 29px 28px 29px 29px 29px 29px 30px 29px 27px 31px 15px 11px 566px 1fr; align-items: center; justify-items: center; padding-top: 1px; }
.titlebar .ic { width: 18px; height: 18px; }
.titlebar .app { width: 22px; height: 20px; }
.titlebar .bar { width: 1.500px; height: 17px; background: #aaa; margin-left: 4px; }
.titlebar .bar + h1 { font-size: 14.250px; line-height: 28px; justify-self: end; margin: -3px -243px 0 0; white-space: nowrap; }
.titlebar .winbtns { justify-self: end; width: 150px; height: 24px; margin: -4px 18px 0 0; }

.tabs { height: 30px; flex: none; display: grid; grid-template-columns: 70px 73px 106px 97px 95px 78px 69px 69px 80px 102px 4px 164px 1fr; margin: 0 8px 0 6px; color: #2b5797; background: #f8faff; }
.tabs span { text-align: center; line-height: 36px; height: 30px; white-space: nowrap; }
.tabs .file { background: #2b579a; color: #fff; height: 29px; line-height: 29px; }
.tabs .active { grid-column: 12; background: #fff; border: 1px solid #b9c9de; border-bottom: 0; border-radius: 4px 4px 0 0; line-height: 34px; height: 31px; z-index: 1; margin-left: -1px; }
.tabs .help { justify-self: end; width: 14px; height: 14px; margin: 8px 6px 0 0; background: #4a7db8; color: #fff; font-size: 10px; line-height: 14px; font-weight: 700; }

.ribbon { height: 114px; flex: none; margin: 0 8px 0 6px; border: 1px solid #b9cbdd; background: #fcfdff; display: flex; }
.group { margin: 9px 0; border-right: 1px solid #b9cbe0; display: grid; grid-template-rows: 79px 20px; }
.group footer { grid-column: 1 / -1; grid-row: 2; text-align: center; color: #9d9d9d; line-height: 22px; padding-left: 2px; }
.bigs { display: flex; }
.big { text-align: center; line-height: 16px; }
.big svg { display: block; margin: 2px auto 9px; }
.cmds { display: grid; grid-auto-rows: 28px; margin-top: -5px; }
.cmds span { display: flex; align-items: center; white-space: nowrap; gap: 3px; height: 26px; margin-top: 1px; }
.cmds .ic { width: 18px; height: 17px; }
.cmds .caret { margin-left: 2px; }
.g-plot { width: 125px; }
.g-plot .big { width: 51px; }
.g-plot .bigs { padding-left: 9px; }
.g-plot .big + .big { margin-left: 2px; }
.g-add { width: 684px; grid-template-columns: 607px 1fr; }
.g-add .cmds { grid-template-columns: 124px 124px 102px 158px 100px; padding-left: 12px; }
.g-add .cmds span { gap: 4px; }
.more { text-align: center; width: 76px; }
.g-attr { width: 310px; }
.g-attr .cmds { grid-template-columns: 139px 1fr; padding-left: 12px; }
.off, .off footer { color: #a9a9ab; }
.g-sel { width: 476px; }
.g-sel .cmds { grid-template-columns: 198px 239px 1fr; padding-left: 9px; }
.g-sel .cmds span { padding-left: 2px; gap: 5px; }
.g-sel .cmds span:nth-child(3n+2) { padding-left: 0; gap: 4px; }
.g-sel .cmds span:nth-child(3n) { padding-left: 1px; }
.g-sel .on { width: 184px; background: #99cff8; border: 1px solid #3f9be8; }
.g-exp { width: 126px; }
.g-exp .cmds { padding-left: 12px; }

.work { height: 974px; flex: none; padding: 5px 8px 4px 6px; display: grid; grid-template-columns: 413px 405px 687px 369px; grid-template-rows: 766px 190px; column-gap: 7px; row-gap: 7px; }
.panel { border: 1px solid #cdd2e0; background: #f9fbff; min-width: 0; overflow: hidden; }
.builder, .settings { grid-row: 1 / 3; }
.graphics { margin-left: -1px; }
.addmat { margin-left: -1px; }
.head { display: flex; align-items: center; gap: 5px; padding-right: 1px; height: 40px; }
.head h2 { flex: 1; padding-left: 9px; font-size: 25.200px; font-weight: 300; line-height: 46px; margin-top: 2px; color: #2f5597; }
.head .caret, .head .pin { margin-top: 2px; }
.mbtools { display: block; margin: 1px 0 6px 5px; }
.tree li { height: 22px; line-height: 23px; display: flex; align-items: center; white-space: pre; padding-left: 24.500px; }
.tree li::before { content: ""; width: 10px; height: 10px; margin: -3px 8px 0 -17.500px; flex: none; }
.tree li .ic { margin-right: 7px; margin-top: -2px; }
.tree .open::before { background: #262626; clip-path: polygon(100% 5%, 100% 90%, 0 90%); }
.tree .shut::before { background: #8a8a8a; clip-path: polygon(20% 0, 85% 50%, 20% 100%, 20% 0, 33% 22%, 33% 78%, 68% 50%, 33% 22%); }
.tree em { font-size: 14px; letter-spacing: .25px; margin-left: 4px; }
.tree .l1 { padding-left: 49.500px; } .tree .l2 { padding-left: 74.500px; } .tree .l3 { padding-left: 99.500px; } .tree .l4 { padding-left: 124.500px; }
.tree .picked { background: #dadadc; }
.tree .num { font: 700 6.500px/7px "DejaVu Sans Mono", monospace; color: #c2406f; white-space: nowrap; padding: 3px 0 0 3px; }
.builder .tree { margin: 0 4px 0 5px; height: 882px; border: 1px solid #c6cad3; background: #fff; }

.settings h3 { font-size: 17.500px; line-height: 26px; font-weight: 300; color: #2f5597; padding-left: 8px; margin-top: 2px; }
.plotbtn { display: flex; align-items: center; gap: 6px; padding-left: 10px; height: 21px; margin-top: 1px; }
.plotbtn .ic { width: 17px; height: 17px; }
.field { display: flex; align-items: center; padding-left: 6px; line-height: 26px; }
.input { border: 1px solid #c3c7d0; border-width: 1.500px; background: #fff; height: 24px; line-height: 22px; padding-left: 3px; }
.labelrow { height: 28px; margin: 17px 0 11px; }
.labelrow label { width: 52px; } .labelrow .input { width: 302px; }
.sq { width: 25px; height: 28px; margin-left: 11px; border: 2px solid #9a9a9a; border-radius: 3px; background: #f0f1f1; display: flex; align-items: center; justify-content: center; }
.sq .ic { width: 18px; height: 19px; }
.select { height: 26px; line-height: 22px; border: 2px solid #9a9a9a; border-radius: 3px; background: linear-gradient(#f2f2f2, #e6e6e6); padding: 0 3px 0 13px; display: flex; justify-content: space-between; align-items: center; }
.select::after { content: ""; border: 4.500px solid transparent; border-top: 5.500px solid #111; border-bottom: 0; margin-top: 4px; }
.settings h4 { font-size: 16.300px; line-height: 32px; height: 32px; margin: 0 1px 3px 0; background: #dee8f4; padding-left: 8px; display: flex; align-items: center; color: #22262c; }
.settings h4::before { content: ""; width: 8px; height: 11px; margin-right: 16px; background: #999; clip-path: polygon(0 0, 100% 50%, 0 100%, 0 0, 15% 20%, 15% 80%, 80% 50%, 15% 20%); }
.settings h4.exp::before { width: 11px; height: 7px; margin: 0 14px 0 -1px; background: #444; clip-path: polygon(0 0, 100% 0, 50% 100%); }
.datarow { height: 28px; margin: 12px 0 14px; }
.datarow label { width: 66px; } .datarow .select { width: 288px; }
.viewrow { height: 28px; margin: 12px 0 4px; }
.viewrow label { width: 48px; } .viewrow .select { width: 306px; }
.check { height: 26px; display: flex; align-items: center; padding-left: 7px; }
.check i { width: 18px; height: 16px; border: 1px solid #555; background: #fff; margin-right: 6px; }
.check.yes i::after { content: ""; display: block; width: 5px; height: 10px; margin: -1px 0 0 6px; border: solid #222; border-width: 0 2.500px 2.500px 0; transform: rotate(38deg); }
.box { border: 1px solid #ccd0d8; margin: 15px 5px 14px 4px; padding: 0 10px; }
.box .field { padding: 0; height: 34px; }
.box .legend { width: max-content; background: #f9fbff; height: 20px; margin: -12px 0 0 -6px; padding: 0 5px; }
.edges { height: 85px; }
.edges .legend + .field { margin-top: 3px; }
.box.edges label { width: 56px; } .edges .select { width: 316px; }
.legends { height: 137px; margin-top: 23px; margin-bottom: 14px; }
.legends .check:not(.legend) { padding-left: 1px; }
.legends .legend + .check { margin-top: 4px; }
.legends label { width: 80px; } .legends .select { width: 292px; }
.legends .check + .field { margin-top: -1px; }

.graphics { border-color: #a5cbe8; }
.ptabs { display: flex; height: 38px; align-items: flex-end; border-bottom: 1px solid #c8cfdb; font-size: 15.800px; padding-left: 5px; }
.ptabs span { height: 31px; line-height: 33px; background: #eaeaea; text-align: center; white-space: nowrap; color: #1b1b1b; }
.ptabs .active { background: #f9fbff; border: 1px solid #c8cfdb; border-bottom: 0; margin-bottom: -1px; color: #2f5597; height: 32px; }
.ptabs .gfx { width: 78px; margin-right: 10px; color: #2b88d8; line-height: 31px; }
.ptabs .conv { width: 183px; letter-spacing: -.15px; }
.ptabs em { flex: 1; }
.ptabs .pin { vertical-align: 1px; }
.ptabs > .caret { margin-bottom: 10px; } .ptabs > .pin { margin: 0 1px 5px 5px; }
.graphics .ptabs > .caret { border-top-color: #555; } .graphics .ptabs > .pin { color: #555; }
.graphics .ptabs .conv { letter-spacing: 0; font-size: 16px; line-height: 32px; }
.gtools { height: 35px; display: grid; align-items: center; justify-items: center; padding: 3px 0 0 4px; grid-template-columns: 28px 28px 31px 19px 28px 10px 30px 20px 28px 28px 28px 29px 10px 28px 21px 10px 28px 28px 28px 28px 28px 31px 19px 28px 28px; }
.gtools .caret { justify-self: start; }
.gtools b { width: 1px; height: 20px; background: #d0d4dc; }
.gtools .ic { width: 20px; height: 20px; }
.plane { width: 18px; height: 17px; font-size: 11px; line-height: 13px; text-align: center; border-left: 1.500px solid #4aa050; border-bottom: 1.500px solid #c03040; color: #4a6080; }
.plane.bg { border-left-color: #4a6080; border-bottom-color: #4aa050; }
.plane.br { border-left-color: #4a6080; }
.tog { width: 22px; height: 22px; border: 1.500px solid #44689a; border-radius: 3px; background: linear-gradient(#7faade, #cfe2f8); display: flex; align-items: center; justify-content: center; }
.tog svg { width: 17px; height: 17px; }
.canvas { display: block; }
.vt { font-family: "DejaVu Sans", sans-serif; font-size: 14.500px; fill: #222; }

.addrow { height: 24px; display: flex; align-items: center; padding-left: 8px; gap: 4px; letter-spacing: .08px; }
.addrow .caret { margin-left: 5px; }
.search { display: flex; padding: 1px 4px 0 5px; gap: 7px; height: 35px; align-items: center; }
.search .input { width: 276px; }
.btn { width: 76px; height: 26px; line-height: 24px; text-align: center; border: 1.500px solid #9a9a9a; border-radius: 2px; background: #ececee; }
.addmat .head { height: 40px; }
.lib { margin: 0 0 0 6px; width: 356px; height: 632px; border: 1px solid #c6cad3; display: grid; grid-template: 610px 20px / 333px 21px; background: #efefef; }
.lib .tree { background: #fff; overflow: hidden; }
.vscroll { background: #efefef; display: flex; flex-direction: column; }
.vscroll svg { height: 21px; flex: none; }
.vscroll b { background: #c9c9c9; height: 547px; margin-bottom: 20px; }
.hscroll { display: flex; height: 20px; }
.hscroll svg { width: 21px; flex: none; } .hscroll b { width: 234px; background: #c9c9c9; margin-right: 56px; }

.messages { grid-column: 3 / 5; margin-left: -1px; }
.messages .ptabs .msg { width: 110px; margin-right: 10px; line-height: 32px; } .prg { width: 75px; margin-right: 10px; } .log { width: 38px; margin-right: 10px; } .tab { width: 73px; }
.mtools { height: 34px; padding: 8px 0 0 9px; }
.logbox { margin: 0 6px 0 5px; height: 110px; border: 1px solid #c6cad3; display: flex; overflow: hidden; }
.lines { flex: 1; font-size: 14.200px; line-height: 20px; padding-left: 3px; margin-top: -11px; white-space: nowrap; }
.logbox .vscroll { width: 21px; } .logbox .vscroll b { height: 36px; margin: 30px 0 0; }
.status { flex: 1; background: #f0edec; padding-left: 1058px; line-height: 40px; letter-spacing: -.25px; }
```
